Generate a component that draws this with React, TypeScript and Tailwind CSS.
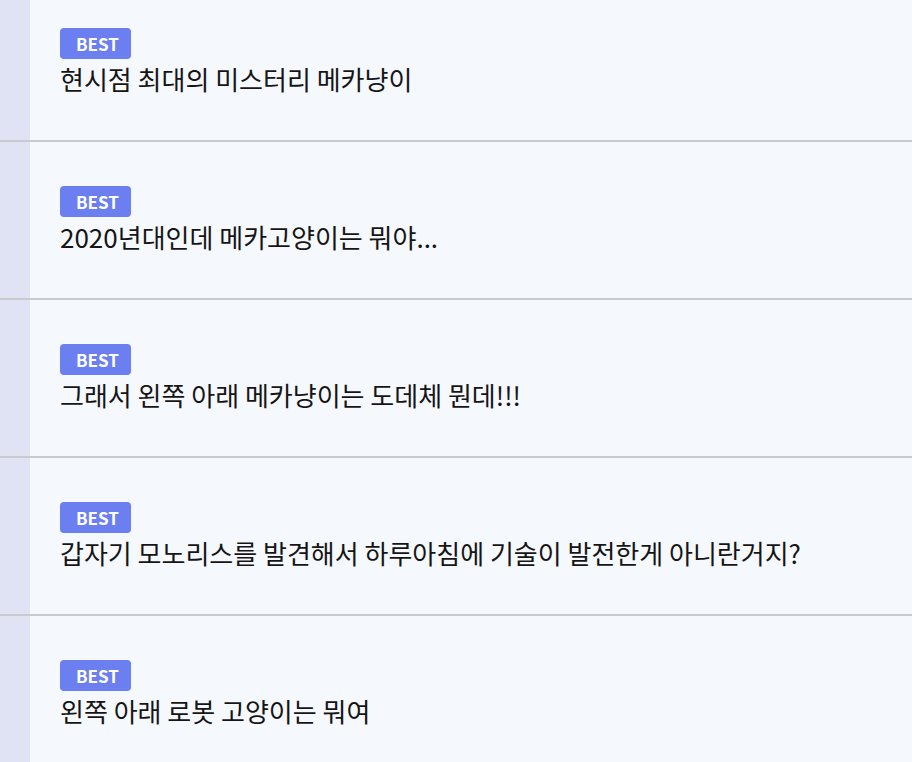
import React from "react";

const items = [
  "현시점 최대의 미스터리 메카냥이",
  "2020년대인데 메카고양이는 뭐야...",
  "그래서 왼쪽 아래 메카냥이는 도데체 뭔데!!!",
  "갑자기 모노리스를 발견해서 하루아침에 기술이 발전한게 아니란거지?",
  "왼쪽 아래 로봇 고양이는 뭐여",
];

export default function App() {
  return (
    <div
      className="w-[912px] h-[762px] overflow-hidden bg-[#f5f8fd]"
      style={{ fontFamily: '"Noto Sans CJK KR", "Noto Sans", sans-serif' }}
    >
      <div className="-mt-[16px] flex flex-col">
        {items.map((t, i) => (
          <div key={i} className={`flex ${i > 0 ? "border-t-2 border-[#c9cacd]" : ""}`}>
            <div className="w-[30px] shrink-0 bg-[#dfe3f3]" />
            <div className="flex-1 h-[156px] pl-[30px] pt-[44px]">
              <div className="inline-flex h-[31px] items-center rounded-[4px] bg-[#6b7ff0] pl-[16px] pr-[12px] text-[17px] font-bold text-white">
                BEST
              </div>
              <div className="mt-[4px] text-[26px] leading-[31px] text-[#151515]">{t}</div>
            </div>
          </div>
        ))}
      </div>
    </div>
  );
}
